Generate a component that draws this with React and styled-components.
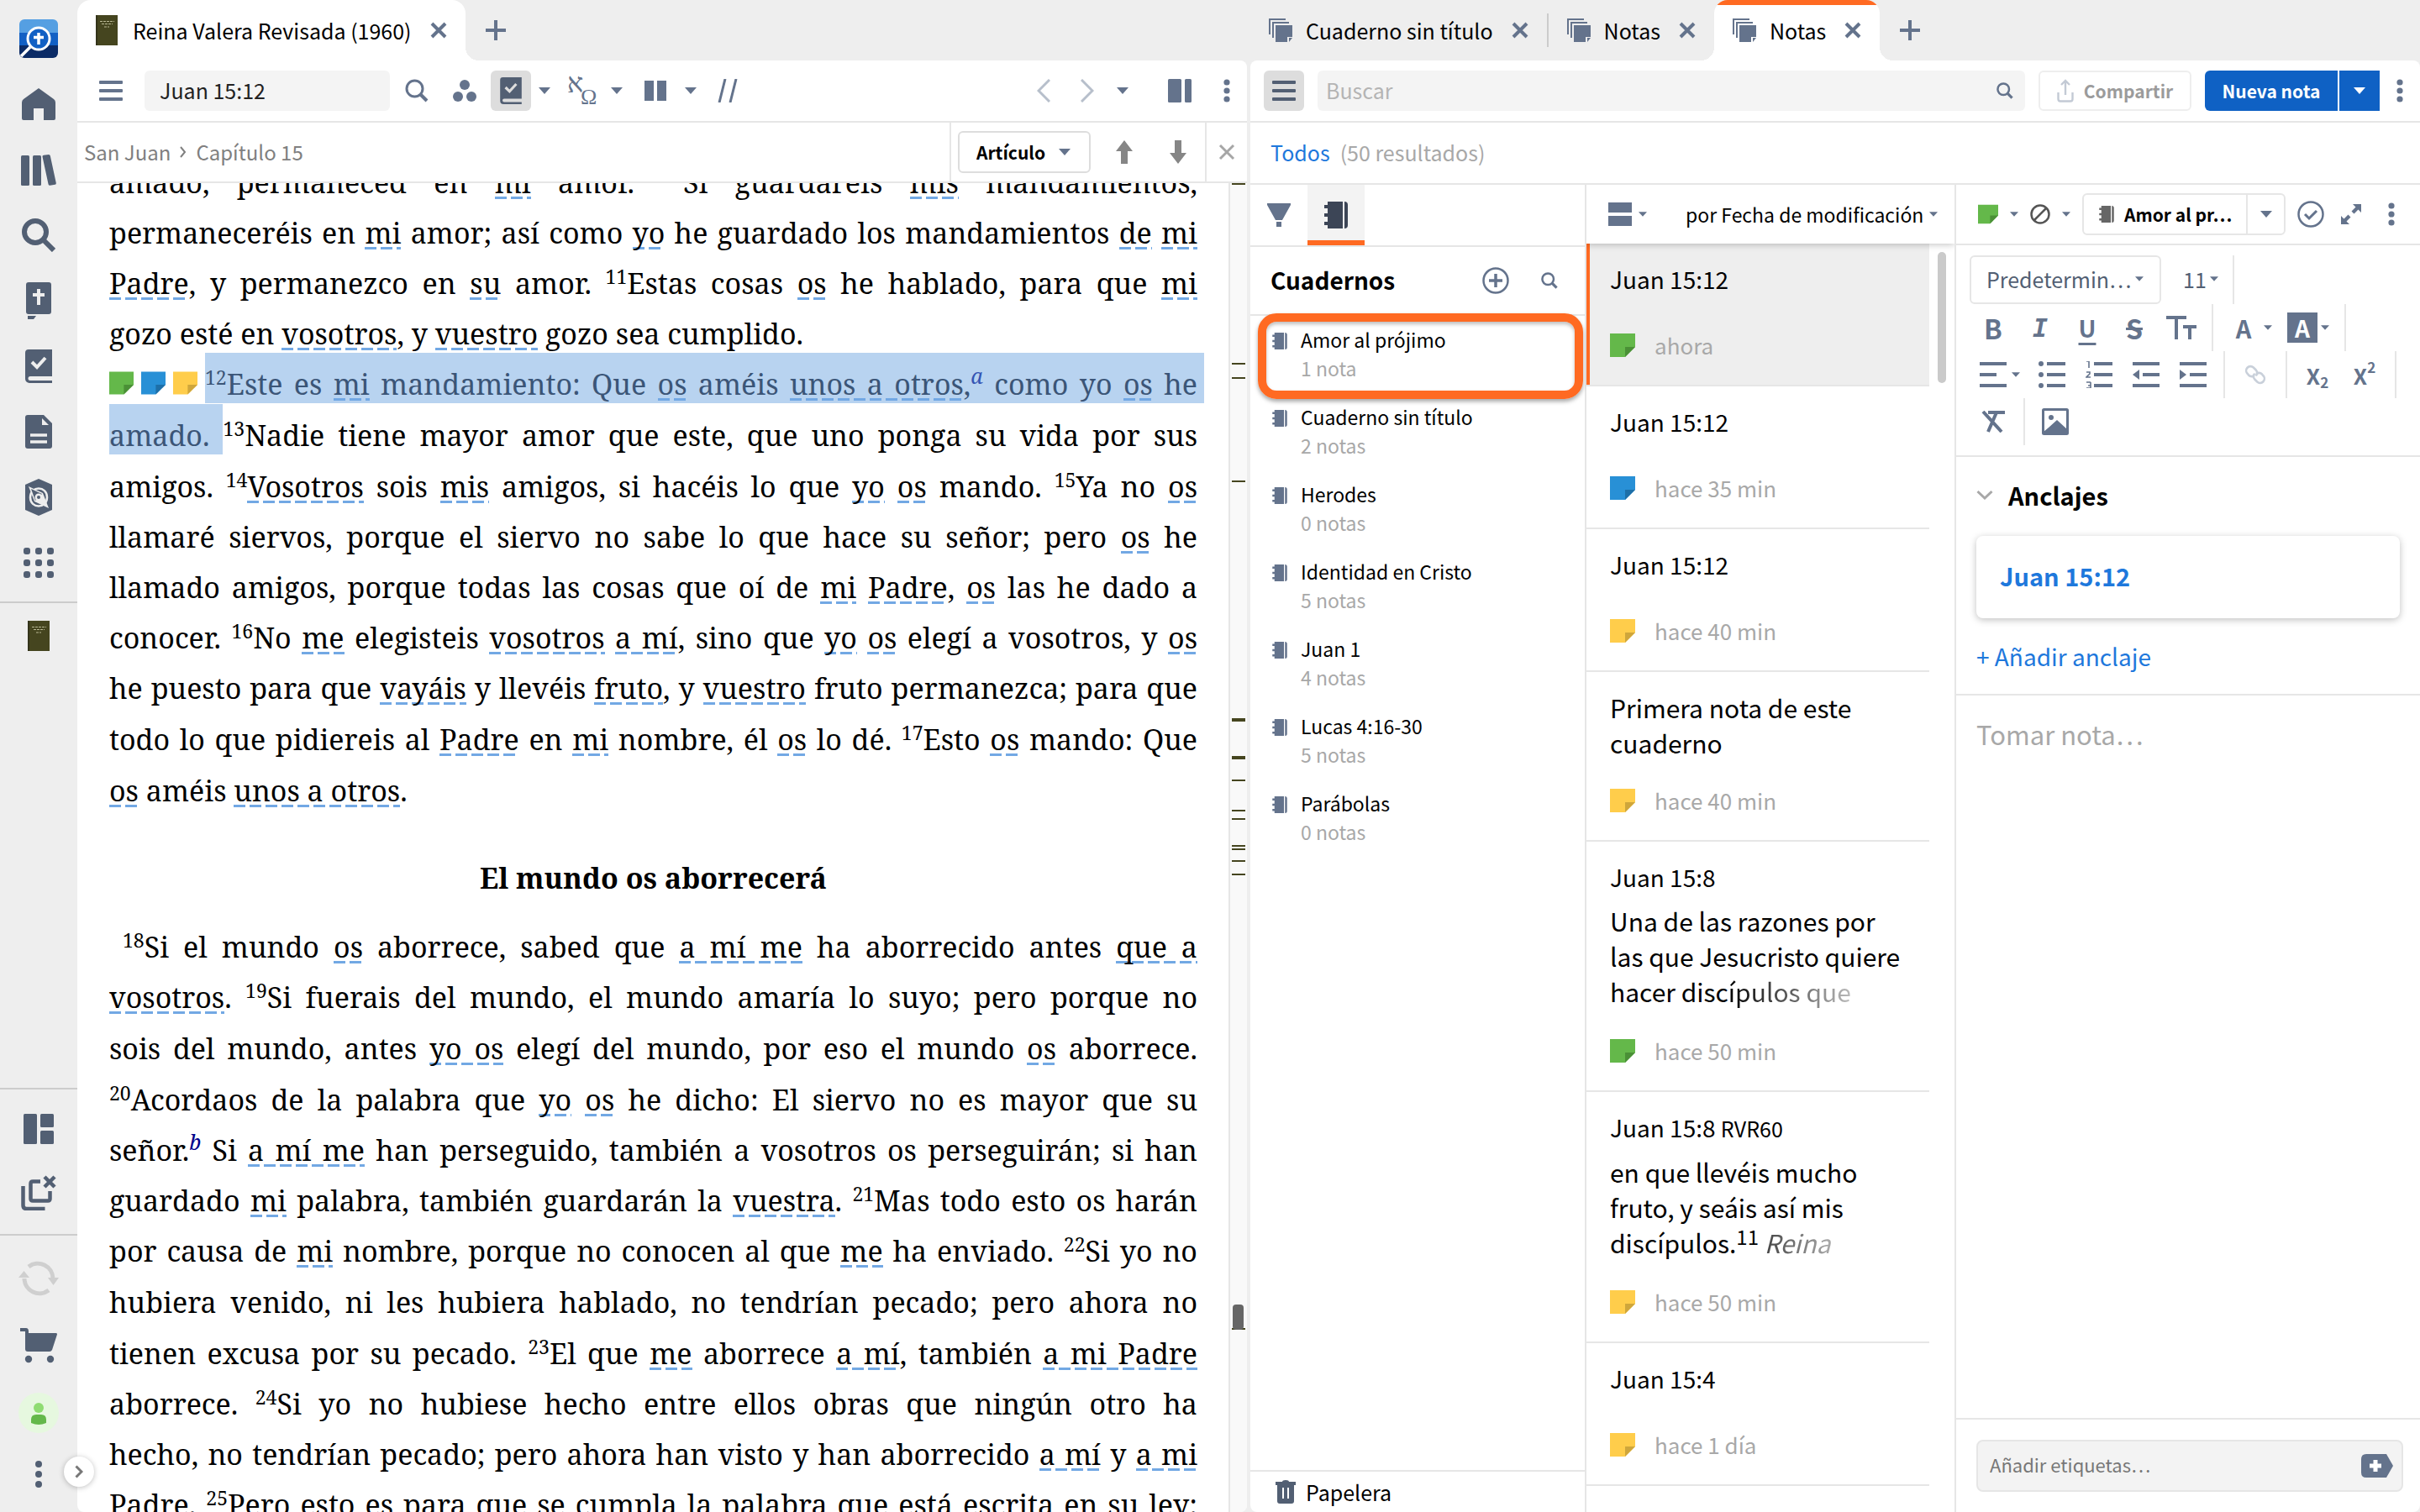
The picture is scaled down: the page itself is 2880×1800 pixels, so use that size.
import React from 'react';
import styled, { createGlobalStyle, css } from 'styled-components';

const ui = '"Noto Sans CJK SC", "Noto Sans", sans-serif';
const serif = '"Noto Serif", "Liberation Serif", serif';
const slate = '#64738c';
const slateDark = '#525f73';
const line = '#e6e6e6';
const orange = '#ff6a22';
const blue = '#1e78dc';

const GlobalStyle = createGlobalStyle`
  *, *::before, *::after { box-sizing: border-box; }
  body { margin: 0; background: #eeeeee; color: #000; font-family: ${ui}; }
  button, input, select, textarea { font: inherit; color: inherit; border: 0; background: none; padding: 0; margin: 0; outline: 0; }
  select { appearance: none; }
  svg { display: block; flex: none; }
  h1, h2, h3, p, ul { margin: 0; padding: 0; }
  ul { list-style: none; }
  a { text-decoration: none; color: inherit; }
`;

/* ---------- icons ---------- */

const Svg = ({ w, h = w, vb = `0 0 ${w} ${h}`, children, ...rest }) => (
  <svg width={w} height={h} viewBox={vb} fill="currentColor" aria-hidden="true" {...rest}>{children}</svg>
);
const stroke = (width, extra = {}) => ({ fill: 'none', stroke: 'currentColor', strokeWidth: width, ...extra });

const Caret = ({ w = 14 }) => <Svg w={w} h={w / 2 + 1} vb="0 0 14 8"><path d="M0 0h14L7 8z" /></Svg>;
const Menu = () => (
  <Svg w={28} h={24}>
    <rect width="28" height="4" rx="1" /><rect y="10" width="28" height="4" rx="1" /><rect y="20" width="28" height="4" rx="1" />
  </Svg>
);
const Magnifier = ({ w = 28, t = 3 }) => (
  <Svg w={w} vb="0 0 28 28"><g {...stroke(t)}><circle cx="11.5" cy="11.5" r="9.5" /><path d="M18 18l8 8" strokeWidth={t + 1} /></g></Svg>
);
const Dots = () => <Svg w={8} h={28}><circle cx="4" cy="4" r="3.6" /><circle cx="4" cy="14" r="3.6" /><circle cx="4" cy="24" r="3.6" /></Svg>;
const Cross = ({ w = 20, t = 4 }) => <Svg w={w} vb="0 0 20 20"><path d="M2 2l16 16M18 2L2 18" {...stroke(t)} /></Svg>;
const Plus = () => <Svg w={24}><path d="M12 0v24M0 12h24" {...stroke(4)} /></Svg>;
const BookThumb = ({ w = 26 }) => (
  <Svg w={w} h={36} vb="0 0 26 36">
    <path d="M0 0h26v36H0z" fill="#45451f" /><path d="M0 0h2v36H0z" fill="#33331a" />
    <path d="M5 7.500h17M7 10.500h13M10 14h6" stroke="#b9b894" strokeWidth="1.200" strokeDasharray="3 1" />
  </Svg>
);
const NotesStack = () => (
  <Svg w={28}>
    <path d="M1 19V1h19M5 23V5h19" {...stroke(2)} />
    <path d="M8 8h20v14h-6v6H8z" /><path d="M24 28l4-5h-4z" />
  </Svg>
);
const sticky = { green: ['#64b84a', '#4a9036'], blue: ['#2890d6', '#1d6fa8'], yellow: ['#ffcd4b', '#cfa63b'] };
const Sticky = ({ color, w = 30, h = 28 }) => (
  <Svg w={w} h={h} vb="0 0 30 28">
    <path d="M0 0h30v16L18 28H0z" fill={sticky[color][0]} />
    <path d="M30 16H18v12z" fill={sticky[color][1]} />
  </Svg>
);
const Notebook = ({ w = 28, h = 32 }) => (
  <Svg w={w} h={h} vb="0 0 28 32">
    <path d="M4 0h18v32H4v-4H0v-4h4v-6H0v-4h4V8H0V4h4z" />
    <path d="M24 0q4 0 4 4v24q0 4-4 4z" />
  </Svg>
);
const CheckBook = ({ w = 32, h = 40, bg = '#eeeeee' }) => (
  <Svg w={w} h={h} vb="0 0 32 40">
    <path d="M4 0h28v32H6a2.500 2.500 0 0 0 0 5h26v3H5a5 5 0 0 1-5-5V4a4 4 0 0 1 4-4z" />
    <path d="M8 15l6 6L24 10" fill="none" stroke={bg} strokeWidth="4" />
  </Svg>
);

const sideIcons = {
  home: <Svg w={40} h={38}><path d="M20 0l18 13q2 1.500 2 4v19q0 2-2 2H26V24H14v14H2q-2 0-2-2V17q0-2.500 2-4z" /></Svg>,
  library: <Svg w={42} h={37}><rect y="1" width="10" height="36" rx="1.500" /><rect x="14" y="1" width="10" height="36" rx="1.500" /><path d="M25.500 2.500Q25.300 1 27 .8L33 0q1.500 0 1.800 1.500L41.800 34q.2 1.500-1.300 1.700l-6 1q-1.500.1-1.900-1.300z" /></Svg>,
  search: <Svg w={40}><circle cx="16" cy="16" r="13" {...stroke(6)} /><path d="M26 26l12 12" {...stroke(6)} /></Svg>,
  bible: <Svg w={30} h={44}><path d="M3 0h24q3 0 3 3v32q0 3-3 3H3q-3 0-3-3V3q0-3 3-3zM2 40h10l-3 4H2z" /><path d="M15 8v19M8 15h14" stroke="#eeeeee" strokeWidth="4" /></Svg>,
  check: <CheckBook />,
  doc: <Svg w={32} h={40}><path d="M3 0h19l10 10v27q0 3-3 3H3q-3 0-3-3V3q0-3 3-3z" /><path d="M20 4v8h8z" fill="#eeeeee" /><path d="M6 24h20M6 32h20" stroke="#eeeeee" strokeWidth="3.500" /></Svg>,
  guide: <Svg w={32} h={44}><path d="M16 0l16 7v30l-16 7-16-7V7z" /><path d="M6 22c0-14 20-14 20 0M26 22c0 14-20 14-20 0" fill="none" stroke="#eeeeee" strokeWidth="2.500" /><path d="M4 9l17 8 7 18-17-8z" fill="#eeeeee" /><path d="M7 12l13 6-8 8z" /><circle cx="16" cy="22" r="4.500" fill="#eeeeee" /><circle cx="16" cy="22" r="2" /></Svg>,
  apps: <Svg w={36}>{[0, 14, 28].map(x => [0, 14, 28].map(y => <rect key={`${x}${y}`} x={x} y={y} width="8" height="8" rx="3" />))}</Svg>,
  layout: <Svg w={36}><rect width="16" height="36" rx="1.500" /><rect x="20" width="16" height="16" rx="1.500" /><rect x="20" y="20" width="16" height="16" rx="1.500" /></Svg>,
  closeAll: <Svg w={42}><g {...stroke(4.5)}><path d="M2.500 13v23q0 4 4 4h22" /><path d="M23 7.500H14q-2.500 0-2.500 2.500v18q0 2.500 2.500 2.500h18q2.500 0 2.500-2.500v-9" /><path d="M28 2l12 12M40 2L28 14" /></g></Svg>,
  sync: <Svg w={48} h={42}><path d="M12 7a18 18 0 0 1 29 14M36 35A18 18 0 0 1 7 21" {...stroke(5)} /><path d="M35 20h13l-6.500 9zM0 20h13L6.500 12z" /></Svg>,
  cart: <Svg w={44} h={42}><path d="M0 0h7q3 0 3 4v2h33q1 0 1 1.500L38 26q-1 2-3 2H9q-3 0-3-3V4H0z" /><circle cx="10" cy="37" r="4.200" /><circle cx="36" cy="37" r="4.200" /></Svg>,
  user: <Svg w={48}><circle cx="24" cy="24" r="24" fill="#e6f8df" /><circle cx="24" cy="18" r="6" fill="#8fdc72" /><path d="M15 36v-4q0-6 6-6h6q6 0 6 6v4q-9 4-18 0z" fill="#64b84a" /></Svg>,
  more: <Svg w={8} h={32}><circle cx="4" cy="4" r="4" /><circle cx="4" cy="16" r="4" /><circle cx="4" cy="28" r="4" /></Svg>,
};

/* ---------- side bar ---------- */

const Shell = styled.div`
  display: flex;
  height: 100vh;
  overflow: hidden;
`;

const SideBar = styled.nav`
  flex: none;
  width: 92px;
  display: flex;
  flex-direction: column;
  justify-content: space-between;
  color: ${slateDark};
`;

const SideGroup = styled.div`
  display: flex;
  flex-direction: column;
  padding: ${p => p.$pad || '7px 0'};
  border-top: ${p => (p.$ruled ? '2px solid #cccccc' : '0')};
`;

const SideButton = styled.button`
  height: ${p => p.$h || 78}px;
  display: flex;
  align-items: center;
  justify-content: center;
  color: ${p => (p.$off ? '#cfcfcf' : 'inherit')};
`;

const Expander = styled.button`
  position: absolute;
  left: 76px;
  bottom: 30px;
  width: 36px;
  height: 36px;
  border-radius: 50%;
  background: #fff;
  color: #777;
  box-shadow: 0 1px 6px rgba(0, 0, 0, 0.25);
  display: flex;
  align-items: center;
  justify-content: center;
  z-index: 2;
`;

/* ---------- panes ---------- */

const Panes = styled.main`
  flex: 1;
  min-width: 0;
  display: grid;
  grid-template-columns: 1fr 1fr;
  gap: 4px;
`;

const Pane = styled.section`
  min-width: 0;
  min-height: 0;
  display: flex;
  flex-direction: column;
`;

const TabBar = styled.div`
  flex: none;
  height: 72px;
  display: flex;
  align-items: center;
  color: ${slate};
`;

const flare = css`
  content: '';
  position: absolute;
  bottom: 0;
  width: 16px;
  height: 16px;
`;

const Tab = styled.div`
  position: relative;
  height: 72px;
  padding: 0 22px;
  display: flex;
  align-items: center;
  font-size: 25px;
  line-height: 36px;
  white-space: nowrap;
  ${p => p.$active && css`
    background: ${p.$accent ? `linear-gradient(${orange} 6px, #fff 6px)` : '#fff'};
    border-radius: 16px 16px 0 0;
    &::after {
      ${flare}
      left: 100%;
      background: radial-gradient(circle at 100% 0, transparent 16px, #fff 16px);
    }
  `}
  ${p => p.$accent && css`
    &::before {
      ${flare}
      right: 100%;
      background: radial-gradient(circle at 0 0, transparent 16px, #fff 16px);
    }
  `}
`;

const TabName = styled.button`
  display: flex;
  align-items: center;
  gap: ${p => p.$gap || 16}px;
  color: ${slate};
  span { color: #000; }
`;

const TabClose = styled.button`
  margin-left: 22px;
  color: ${slate};
`;

const TabRule = styled.div`
  width: 2px;
  height: 40px;
  background: #cccccc;
`;

const NewTab = styled.button`
  margin-left: 24px;
  color: ${slate};
`;

const Surface = styled.div`
  flex: 1;
  min-height: 0;
  display: flex;
  flex-direction: column;
  background: #fff;
  border-radius: ${p => p.$r || '8px'};
  overflow: hidden;
`;

const ToolBar = styled.div`
  flex: none;
  height: ${p => p.$h || 74}px;
  display: flex;
  align-items: center;
  border-bottom: 2px solid ${line};
  padding: 0 ${p => p.$pr || 0}px 0 ${p => p.$pl || 0}px;
  color: ${slate};
`;

const Tool = styled.button`
  flex: none;
  width: ${p => p.$w || 48}px;
  height: 48px;
  margin-left: ${p => p.$ml || 0}px;
  display: flex;
  align-items: center;
  justify-content: center;
  border-radius: 6px;
  background: ${p => (p.$on ? '#dddddd' : 'none')};
  color: ${p => (p.$on ? slateDark : p.$color || 'inherit')};
`;

const Grow = styled.div`
  flex: 1;
`;

const RefInput = styled.input`
  width: 292px;
  height: 48px;
  margin-left: 26px;
  padding: 0 18px 2px;
  border-radius: 6px;
  background: #f4f4f4;
  color: #222;
  font-size: 25px;
`;

const Crumbs = styled.div`
  flex: 1;
  display: flex;
  align-items: center;
  gap: 11px;
  padding-left: 8px;
  font-size: 24px;
  line-height: 36px;
  color: #808080;
`;

const CrumbTools = styled.div`
  height: 100%;
  display: flex;
  align-items: center;
  border-left: 2px solid ${line};
  padding-left: ${p => p.$pl || 0}px;
  color: #868686;
`;

const UnitSelect = styled.label`
  width: 158px;
  height: 50px;
  display: flex;
  align-items: center;
  justify-content: space-between;
  padding: 0 22px 0 20px;
  border: 2px solid #dddddd;
  border-radius: 6px;
  font-size: 21px;
  font-weight: 700;
  color: ${slate};
  select { color: #000; }
`;

/* ---------- scripture ---------- */

const Reader = styled.div`
  flex: 1;
  min-height: 0;
  display: flex;
`;

const Scripture = styled.article`
  flex: 1;
  min-width: 0;
  overflow: hidden;
  padding: 0 37px 0 38px;
  font-family: ${serif};
  font-size: 34px;
  font-weight: 450;
`;

const Passage = styled.div`
  margin-top: ${p => p.$mt}px;
`;

const VerseLine = styled.p`
  line-height: ${p => (p.$tall ? 62 : 60)}px;
  padding-left: ${p => (p.$indent ? 16 : 0)}px;
  white-space: nowrap;
  text-align: left;
  text-align-last: ${p => (p.$last ? 'left' : 'justify')};
`;

const SectionTitle = styled.h2`
  margin: 44px 0 22px;
  text-align: center;
  font-size: 34px;
  line-height: 60px;
`;

const VerseNumber = styled.sup`
  font-size: 23px;
  line-height: 0;
  vertical-align: 12px;
`;

const FootNote = styled.a`
  font-size: 25px;
  font-style: italic;
  line-height: 0;
  vertical-align: 13px;
  color: ${p => (p.$lit ? '#3455b4' : '#00008b')};
`;

const Linked = styled.span`
  background: repeating-linear-gradient(90deg, #72a8e4 0 14px, transparent 14px 19px) 0 calc(100% - 3px) / 100% 3px no-repeat;
`;

const Lit = styled.span`
  background: #b8d3f0;
  color: #3b5577;
  padding: 14px ${p => p.$end || 0}px 0 0;
  margin-right: -${p => p.$end || 0}px;
`;

const Anchors = styled.span`
  display: inline-flex;
  gap: 9px;
  margin-right: 9px;
`;

const Rail = styled.div`
  position: relative;
  flex: none;
  width: 22px;
  border-left: 2px solid ${line};
  background: #f9f9f9;
`;

const RailMark = styled.i`
  position: absolute;
  left: 2px;
  right: 2px;
  background: #45451f;
`;

const RailThumb = styled.i`
  position: absolute;
  left: 3px;
  width: 13px;
  height: 30px;
  border-radius: 4px;
  background: #666666;
`;

const first = [
  'amado, permaneced en _mi_ amor. ^10Si guardareis _mis_ mandamientos,',
  'permaneceréis en _mi_ amor; así como _yo_ he guardado los mandamientos _de_ _mi_',
  '_Padre_, y permanezco en _su_ amor. ^11Estas cosas _os_ he hablado, para que _mi_',
  'gozo esté en _vosotros_, y _vuestro_ gozo sea cumplido.',
];
const second = [
  'amigos. ^14_Vosotros_ sois _mis_ amigos, si hacéis lo que _yo_ _os_ mando. ^15Ya no _os_',
  'llamaré siervos, porque el siervo no sabe lo que hace su señor; pero _os_ he',
  'llamado amigos, porque todas las cosas que oí de _mi_ _Padre_, _os_ las he dado a',
  'conocer. ^16No _me_ elegisteis _vosotros_ _a mí_, sino que _yo_ _os_ elegí a vosotros, y _os_',
  'he puesto para que _vayáis_ y llevéis _fruto_, y _vuestro_ fruto permanezca; para que',
  'todo lo que pidiereis al _Padre_ en _mi_ nombre, él _os_ lo dé. ^17Esto _os_ mando: Que',
  '_os_ améis _unos a otros_.',
];
const third = [
  '^18Si el mundo _os_ aborrece, sabed que _a mí me_ ha aborrecido antes _que a_',
  '_vosotros_. ^19Si fuerais del mundo, el mundo amaría lo suyo; pero porque no',
  'sois del mundo, antes _yo os_ elegí del mundo, por eso el mundo _os_ aborrece.',
  '^20Acordaos de la palabra que _yo_ _os_ he dicho: El siervo no es mayor que su',
  'señor.{b} Si _a mí me_ han perseguido, también a vosotros os perseguirán; si han',
  'guardado _mi_ palabra, también guardarán la _vuestra_. ^21Mas todo esto os harán',
  'por causa de _mi_ nombre, porque no conocen al que _me_ ha enviado. ^22Si yo no',
  'hubiera venido, ni les hubiera hablado, no tendrían pecado; pero ahora no',
  'tienen excusa por su pecado. ^23El que _me_ aborrece _a mí_, también _a mi Padre_',
  'aborrece. ^24Si yo no hubiese hecho entre ellos obras que ningún otro ha',
  'hecho, no tendrían pecado; pero ahora han visto y han aborrecido _a mí_ y _a mi_',
  'Padre. ^25Pero esto es para que se cumpla la palabra que está escrita en su ley:',
];

// ^n verse number, _x_ linked word, {x} footnote
const mark = (text, lit) => text.split(/(\^\d+|_[^_]+_|\{\w\})/).map((part, i) => {
  if (part[0] === '^') return <VerseNumber key={i}>{part.slice(1)}</VerseNumber>;
  if (part[0] === '_') return <Linked key={i}>{part.slice(1, -1)}</Linked>;
  if (part[0] === '{') return <FootNote key={i} href="#" $lit={lit}>{part[1]}</FootNote>;
  return part;
});

// [top, height] of the visual filter hits along the scroll rail
const hits = [[0, 2], [214, 2], [231, 2], [354, 2], [637, 4], [682, 4], [710, 2], [746, 2], [756, 2], [788, 2], [792, 2], [806, 2], [822, 2], [1363, 2]];

const ReaderPane = () => (
  <Pane>
    <TabBar>
      <Tab $active>
        <TabName $gap={18}><BookThumb /><span>Reina Valera Revisada (1960)</span></TabName>
        <TabClose aria-label="Cerrar"><Cross /></TabClose>
      </Tab>
      <NewTab aria-label="Nueva pestaña"><Plus /></NewTab>
    </TabBar>
    <Surface $r="0 8px 8px 8px">
      <ToolBar $pl={26}>
        <Menu />
        <RefInput aria-label="Referencia" defaultValue="Juan 15:12" />
        <Tool $w={64} aria-label="Buscar"><Magnifier /></Tool>
        <Tool $w={50} aria-label="Recursos relacionados">
          <Svg w={28} h={26}><circle cx="14" cy="6" r="6" /><circle cx="6" cy="20" r="6" /><circle cx="22" cy="20" r="6" /></Svg>
        </Tool>
        <Tool $ml={6} $on aria-label="Filtros visuales"><CheckBook w={28} h={32} bg="#dddddd" /></Tool>
        <Tool $w={32} aria-label="Más filtros"><Caret /></Tool>
        <Tool $w={60} aria-label="Interlineal">
          <Svg w={40} h={44} fontFamily="Liberation Serif, serif">
            <text x="1" y="24" fontSize="32">א</text>
            <text x="17" y="38" fontSize="26">Ω</text>
          </Svg>
        </Tool>
        <Tool $w={20} aria-label="Opciones interlineal"><Caret /></Tool>
        <Tool $w={72} aria-label="Columnas"><Svg w={26} h={24}><path d="M0 0h11v24H0zM15 0h11v24H15z" /></Svg></Tool>
        <Tool $w={12} aria-label="Más columnas"><Caret /></Tool>
        <Tool $w={76} aria-label="Paralelos"><Svg w={24} h={28}><path d="M2 28L9 0M15 28L22 0" {...stroke(3)} /></Svg></Tool>
        <Grow />
        <Tool $w={52} $color="#b7bfcb" aria-label="Atrás"><Svg w={16} h={28}><path d="M15 1L2 14l13 13" {...stroke(3)} /></Svg></Tool>
        <Tool $w={52} $color="#b7bfcb" aria-label="Adelante"><Svg w={16} h={28}><path d="M1 1l13 13L1 27" {...stroke(3)} /></Svg></Tool>
        <Tool $w={32} aria-label="Historial"><Caret /></Tool>
        <Tool $w={64} $ml={20} aria-label="Panel lateral"><Svg w={28}><rect width="16" height="28" rx="1.500" /><rect x="20" width="8" height="28" rx="1.500" /></Svg></Tool>
        <Tool aria-label="Menú"><Dots /></Tool>
      </ToolBar>
      <ToolBar $h={72}>
        <Crumbs>
          <span>San Juan</span>
          <Svg w={8} h={14}><path d="M1 1l5 6-5 6" {...stroke(2)} /></Svg>
          <span>Capítulo 15</span>
        </Crumbs>
        <CrumbTools $pl={8}>
          <UnitSelect>
            <select aria-label="Unidad"><option>Artículo</option></select>
            <Caret />
          </UnitSelect>
          <Tool $w={64} $ml={8} aria-label="Anterior"><Svg w={20} h={28}><path d="M10 0l10 13h-6v15H6V13H0z" /></Svg></Tool>
          <Tool $w={64} aria-label="Siguiente"><Svg w={20} h={28}><path d="M10 28l10-13h-6V0H6v15H0z" /></Svg></Tool>
        </CrumbTools>
        <CrumbTools>
          <Tool $w={48} $color="#a6a6a6" aria-label="Cerrar"><Cross t={3} /></Tool>
        </CrumbTools>
      </ToolBar>
      <Reader>
        <Scripture>
          <Passage $mt={-31}>
            {first.map((text, i) => <VerseLine key={text} $last={i === 3}>{mark(text)}</VerseLine>)}
            <VerseLine>
              <Anchors>
                <Sticky color="green" w={29} /><Sticky color="blue" w={29} /><Sticky color="yellow" w={29} />
              </Anchors>
              <Lit $end={8}>{mark('^12Este es _mi_ mandamiento: Que _os_ améis _unos a otros_,{a} como yo _os_ he', true)}</Lit>
            </VerseLine>
            <VerseLine $tall>
              <Lit>amado. </Lit>
              {mark('^13Nadie tiene mayor amor que este, que uno ponga su vida por sus')}
            </VerseLine>
            {second.map((text, i) => <VerseLine key={text} $tall={i === 5} $last={i === 6}>{mark(text)}</VerseLine>)}
          </Passage>
          <SectionTitle>El mundo os aborrecerá</SectionTitle>
          <Passage $mt={0}>
            {third.map((text, i) => <VerseLine key={text} $indent={i === 0} $tall={i === 2 || i === 7}>{mark(text)}</VerseLine>)}
          </Passage>
        </Scripture>
        <Rail>
          {hits.map(([top, height]) => <RailMark key={top} style={{ top, height }} />)}
          <RailThumb style={{ top: 1335 }} />
        </Rail>
      </Reader>
    </Surface>
  </Pane>
);

/* ---------- notes ---------- */

const SearchBox = styled.label`
  flex: 1;
  min-width: 0;
  height: 48px;
  margin: 0 16px;
  padding: 0 14px 0 10px;
  display: flex;
  align-items: center;
  border-radius: 6px;
  background: #f4f4f4;
  font-size: 25px;
  input { flex: 1; padding-bottom: 2px; }
  input::placeholder { color: #b4b4b4; }
`;

const ShareButton = styled.button`
  width: 182px;
  height: 48px;
  margin-right: 16px;
  display: flex;
  align-items: center;
  justify-content: center;
  gap: 12px;
  border: 2px solid #eeeeee;
  border-radius: 6px;
  font-size: 21px;
  font-weight: 700;
  color: #9b9b9b;
  svg { color: #c3cad5; }
`;

const Primary = styled.button`
  width: ${p => p.$w}px;
  height: 48px;
  display: flex;
  align-items: center;
  justify-content: center;
  background: #0f61c4;
  color: #fff;
  font-size: 21px;
  font-weight: 700;
  border-radius: ${p => (p.$first ? '6px 0 0 6px' : '0')};
  margin-right: ${p => (p.$first ? 2 : 0)}px;
`;

const Results = styled.p`
  padding: 0 0 2px 24px;
  font-size: 25px;
  line-height: 36px;
  color: #a8a8a8;
  a { color: ${blue}; margin-right: 12px; }
`;

const NotesBody = styled.div`
  flex: 1;
  min-height: 0;
  display: grid;
  grid-template-columns: 400px 440px 1fr;
`;

const Column = styled.div`
  position: relative;
  min-width: 0;
  min-height: 0;
  display: flex;
  flex-direction: column;
  border-right: ${p => (p.$last ? '0' : `2px solid ${line}`)};
`;

const SideTab = styled.button`
  width: ${p => (p.$active ? 68 : 52)}px;
  height: 72px;
  margin-left: 8px;
  display: flex;
  align-items: center;
  justify-content: center;
  color: ${p => (p.$active ? '#3c4556' : slate)};
  background: ${p => (p.$active ? '#f3f3f3' : 'none')};
  box-shadow: ${p => (p.$active ? `inset 0 -6px 0 ${orange}` : 'none')};
`;

const ColumnTitle = styled.h2`
  flex: 1;
  padding: 0 0 2px 24px;
  font-size: 28px;
  line-height: 40px;
  font-weight: 700;
  color: #000;
`;

const NotebookList = styled.ul`
  position: relative;
  flex: 1;
`;

const NotebookItem = styled.li`
  display: flex;
  align-items: flex-start;
  gap: 16px;
  padding: 11px 0 13px 26px;
  font-size: 23px;
  line-height: 34px;
  svg { margin-top: 9px; color: ${slate}; }
  small { display: block; font-size: 23px; color: #a8a8a8; }
`;

const Highlight = styled.div`
  position: absolute;
  left: 9px;
  right: 2px;
  top: -3px;
  height: 102px;
  border: 10px solid ${orange};
  border-radius: 22px;
  box-shadow: 0 3px 5px rgba(0, 0, 0, 0.35), inset 0 3px 4px rgba(0, 0, 0, 0.25);
  pointer-events: none;
`;

const Trash = styled.button`
  height: 50px;
  display: flex;
  align-items: center;
  gap: 12px;
  padding-left: 30px;
  border-top: 2px solid ${line};
  font-size: 25px;
  line-height: 36px;
  svg { color: ${slateDark}; }
`;

const ListHeader = styled.div`
  position: relative;
  z-index: 1;
  flex: none;
  height: 70px;
  padding: 0 20px 0 26px;
  display: flex;
  align-items: center;
  gap: 6px;
  color: ${slate};
  background: #fff;
  box-shadow: 0 1px 8px rgba(0, 0, 0, 0.25);
  font-size: 23px;
  clip-path: inset(0 0 -12px 0);
  select { color: #000; }
`;

const NoteScroll = styled.div`
  flex: 1;
  min-height: 0;
  display: flex;
  overflow: hidden;
`;

const NoteList = styled.ul`
  flex: 1;
  min-width: 0;
`;

const ScrollThumb = styled.div`
  width: 10px;
  height: 156px;
  margin: 10px 10px 0;
  border-radius: 5px;
  background: #cacaca;
`;

const Note = styled.li`
  padding: 21px 16px 27px 28px;
  border-bottom: 2px solid ${line};
  font-size: 30px;
  line-height: 42px;
  ${p => p.$selected && css`
    background: #eeeeee;
    box-shadow: inset 4px 0 0 ${orange};
  `}
`;

const NoteText = styled.div`
  min-height: 52px;
  margin-bottom: 28px;
  h3 { font-size: 28px; font-weight: 400; }
  h3 + p { padding: 10px 0 2px; }
  h3 small { font-size: 25px; }
  sup { font-size: 24px; line-height: 0; vertical-align: 10px; }
`;

const Fade = styled.span`
  background: linear-gradient(90deg, ${p => p.$from || '#000'}, ${p => p.$to || '#bbb'});
  background-clip: text;
  color: transparent;
  font-style: ${p => (p.$italic ? 'italic' : 'normal')};
`;

const NoteMeta = styled.div`
  display: flex;
  align-items: center;
  gap: 23px;
  font-size: 26px;
  line-height: 40px;
  color: #a8a8a8;
`;

const NotebookPicker = styled.div`
  width: 242px;
  height: 50px;
  display: flex;
  align-items: center;
  border: 2px solid ${line};
  border-radius: 6px;
  font-size: 21px;
  font-weight: 700;
`;

const PickerName = styled.button`
  flex: 1;
  height: 100%;
  display: flex;
  align-items: center;
  gap: 12px;
  padding-left: 18px;
  border-right: 2px solid ${line};
  font-weight: 700;
  white-space: nowrap;
  color: #000;
  svg { color: #666; }
`;

const FormatBar = styled.div`
  padding: 12px 0 12px 16px;
  border-bottom: 2px solid ${line};
  color: ${slate};
  font-weight: 700;
`;

const FormatRow = styled.div`
  display: flex;
  height: ${p => p.$h || 56}px;
`;

const FormatGroup = styled.div`
  display: flex;
  align-items: center;
  padding: 0 ${p => (p.$pr === undefined ? 8 : p.$pr)}px 0 ${p => p.$pl || 0}px;
  border-right: ${p => (p.$open ? '0' : `2px solid ${line}`)};
`;

const FormatButton = styled(Tool)`
  width: ${p => p.$w || 56}px;
  font-family: ${p => (p.$slab ? '"DejaVu Sans Mono", monospace' : 'inherit')};
  font-size: ${p => p.$size || 32}px;
  font-weight: 700;
  font-style: ${p => (p.$italic ? 'italic' : 'normal')};
  text-decoration: ${p => p.$deco || 'none'};
  text-decoration-thickness: 3px;
  text-underline-offset: 6px;
  sub, sup { font-size: 17px; line-height: 0; }
  sub { margin-top: 18px; }
  sup { margin-top: -18px; }
`;

const FillSwatch = styled.span`
  width: 36px;
  height: 36px;
  display: flex;
  align-items: center;
  justify-content: center;
  background: ${slate};
  color: #fff;
  font-size: 28px;
`;

const FontSelect = styled.label`
  display: flex;
  align-items: center;
  gap: 4px;
  height: 58px;
  width: ${p => p.$w}px;
  padding: 0 ${p => p.$pr}px 2px ${p => p.$pl}px;
  justify-content: space-between;
  border: ${p => (p.$boxed ? `2px solid ${line}` : '0')};
  border-radius: 6px;
  font-size: 25px;
  font-weight: 400;
  select { color: ${slateDark}; }
`;

const AnchorSection = styled.section`
  padding: 0 24px;
  border-bottom: 2px solid ${line};
`;

const AnchorTitle = styled.h3`
  display: flex;
  align-items: center;
  gap: 18px;
  padding-bottom: 4px;
  font-size: 29px;
  line-height: 90px;
  svg { color: #a8a8a8; }
`;

const AnchorCard = styled.a`
  display: block;
  padding: 0 28px 4px;
  border-radius: 8px;
  box-shadow: 0 2px 8px rgba(0, 0, 0, 0.25);
  font-size: 29px;
  line-height: 94px;
  font-weight: 700;
  color: ${blue};
`;

const AddAnchor = styled.button`
  font-size: 28px;
  line-height: 90px;
  color: ${blue};
`;

const NoteInput = styled.textarea`
  flex: 1;
  padding: 22px 24px;
  resize: none;
  font-size: 31px;
  line-height: 48px;
  &::placeholder { color: #a8a8a8; }
`;

const TagRow = styled.div`
  padding: 24px 20px 24px 24px;
  border-top: 2px solid ${line};
`;

const TagBox = styled.label`
  display: flex;
  align-items: center;
  height: 62px;
  padding: 0 10px 0 14px;
  border: 2px solid ${line};
  border-radius: 8px;
  background: #f3f3f3;
  color: ${slate};
  font-size: 22px;
  input { flex: 1; padding-bottom: 4px; }
  input::placeholder { color: #777; }
`;

const notebooks = [
  ['Amor al prójimo', '1 nota'],
  ['Cuaderno sin título', '2 notas'],
  ['Herodes', '0 notas'],
  ['Identidad en Cristo', '5 notas'],
  ['Juan 1', '4 notas'],
  ['Lucas 4:16-30', '5 notas'],
  ['Parábolas', '0 notas'],
];

const notes = [
  { title: 'Juan 15:12', color: 'green', time: 'ahora', selected: true },
  { title: 'Juan 15:12', color: 'blue', time: 'hace 35 min' },
  { title: 'Juan 15:12', color: 'yellow', time: 'hace 40 min' },
  { body: <>Primera nota de este<br />cuaderno</>, color: 'yellow', time: 'hace 40 min' },
  {
    title: 'Juan 15:8',
    body: <>Una de las razones por<br />las que Jesucristo quiere<br />hacer disc<Fade>ípulos que</Fade></>,
    color: 'green',
    time: 'hace 50 min',
  },
  {
    title: <>Juan 15:8 <small>RVR60</small></>,
    body: <>en que llevéis mucho<br />fruto, y seáis así mis<br />discípulos.<sup>11</sup> <Fade $italic $from="#444" $to="#aaa">Reina</Fade></>,
    color: 'yellow',
    time: 'hace 50 min',
  },
  { title: 'Juan 15:4', color: 'yellow', time: 'hace 1 día' },
];

const ListLines = ({ children, short }) => (
  <Svg w={32}>
    <path d={short ? 'M0 3h32M0 16h20M0 29h32' : 'M10 3h22M10 16h22M10 29h22'} {...stroke(4)} />
    {children}
  </Svg>
);

const NotebookColumn = () => (
  <Column>
    <ToolBar>
      <SideTab aria-label="Filtros"><Svg w={28}><path d="M0 0h28v2L18 20h-8L0 2zM11 22h6v6h-6z" /></Svg></SideTab>
      <SideTab $active aria-label="Cuadernos"><Notebook /></SideTab>
    </ToolBar>
    <ToolBar $h={82} $pr={10}>
      <ColumnTitle>Cuadernos</ColumnTitle>
      <Tool $w={64} aria-label="Añadir cuaderno">
        <Svg w={32}><circle cx="16" cy="16" r="14.500" {...stroke(2.5)} /><path d="M16 8v16M8 16h16" {...stroke(3.5)} /></Svg>
      </Tool>
      <Tool $w={64} aria-label="Buscar cuaderno"><Magnifier w={20} t={3.5} /></Tool>
    </ToolBar>
    <NotebookList>
      {notebooks.map(([name, count]) => (
        <NotebookItem key={name}>
          <Notebook w={18} h={20} />
          <div>{name}<small>{count}</small></div>
        </NotebookItem>
      ))}
      <Highlight />
    </NotebookList>
    <Trash>
      <Svg w={24} h={28}><path d="M0 2h8q0-2 4-2t4 2h8v4H0zM2 6h20v19q0 3-3 3H5q-3 0-3-3z" /><path d="M9 9v13M15 9v13" stroke="#fff" strokeWidth="2" /></Svg>
      Papelera
    </Trash>
  </Column>
);

const NoteColumn = () => (
  <Column>
    <ListHeader>
      <Tool $w={28} aria-label="Vista"><Svg w={28}><path d="M0 0h28v12H0zM0 16h28v12H0z" /></Svg></Tool>
      <Tool $w={14} aria-label="Opciones de vista"><Caret w={10} /></Tool>
      <Grow />
      <select aria-label="Ordenar"><option>por Fecha de modificación</option></select>
      <Caret w={10} />
    </ListHeader>
    <NoteScroll>
      <NoteList>
        {notes.map((note, i) => (
          <Note key={i} $selected={note.selected}>
            <NoteText>
              {note.title && <h3>{note.title}</h3>}
              {note.body && <p>{note.body}</p>}
            </NoteText>
            <NoteMeta><Sticky color={note.color} />{note.time}</NoteMeta>
          </Note>
        ))}
      </NoteList>
      <ScrollThumb />
    </NoteScroll>
  </Column>
);

const EditorColumn = () => (
  <Column $last>
    <ToolBar $h={72} $pl={26}>
      <Sticky color="green" w={24} h={24} />
      <Tool $w={38} aria-label="Color"><Caret w={10} /></Tool>
      <Svg w={24} color="#555"><circle cx="12" cy="12" r="10.500" {...stroke(2.5)} /><path d="M5 19L19 5" {...stroke(2.5)} /></Svg>
      <Tool $w={38} aria-label="Estilo"><Caret w={10} /></Tool>
      <NotebookPicker>
        <PickerName><Notebook w={18} h={20} />Amor al pr…</PickerName>
        <Tool $w={43} aria-label="Elegir cuaderno"><Caret /></Tool>
      </NotebookPicker>
      <Tool $w={60} aria-label="Listo"><Svg w={32}><circle cx="16" cy="16" r="14.500" {...stroke(2.5)} /><path d="M9 16l5 5 9-9" {...stroke(3)} /></Svg></Tool>
      <Tool $w={36} aria-label="Expandir">
        <Svg w={24}><path d="M14 0h10v10l-3.500-3.500-5 5-3-3 5-5zM0 24V14l3.500 3.500 5-5 3 3-5 5L10 24z" /></Svg>
      </Tool>
      <Tool $w={60} aria-label="Menú"><Dots /></Tool>
    </ToolBar>
    <FormatBar>
      <FormatRow $h={58}>
        <FontSelect $boxed $w={228} $pl={18} $pr={19}>
          <select aria-label="Fuente"><option>Predetermin…</option></select>
          <Caret w={10} />
        </FontSelect>
        <FormatGroup $pr={0}>
          <FontSelect $w={85} $pl={26} $pr={17}>
            <select aria-label="Tamaño"><option>11</option></select>
            <Caret w={10} />
          </FontSelect>
        </FormatGroup>
      </FormatRow>
      <FormatRow>
        <FormatGroup>
          <FormatButton>B</FormatButton>
          <FormatButton $italic $slab $size={30}>I</FormatButton>
          <FormatButton $deco="underline" $size={28}>U</FormatButton>
          <FormatButton $deco="line-through">S</FormatButton>
          <FormatButton aria-label="Mayúsculas"><Svg w={36} h={28}><path d="M0 2h24M12 2v26M20 13h16M28 13v15" {...stroke(4)} /></Svg></FormatButton>
        </FormatGroup>
        <FormatGroup $pl={14} $pr={14}>
          <FormatButton $w={44} $size={29}>A</FormatButton>
          <FormatButton $w={14} aria-label="Color de texto"><Caret w={10} /></FormatButton>
          <FormatButton $w={36} $ml={16}><FillSwatch>A</FillSwatch></FormatButton>
          <FormatButton $w={18} aria-label="Color de fondo"><Caret w={10} /></FormatButton>
        </FormatGroup>
      </FormatRow>
      <FormatRow>
        <FormatGroup $pl={8}>
          <FormatButton $w={40} aria-label="Alinear"><ListLines short /></FormatButton>
          <FormatButton $w={14} aria-label="Alineación"><Caret w={10} /></FormatButton>
          <FormatButton $ml={8} aria-label="Viñetas"><ListLines><circle cx="3" cy="3" r="3" /><circle cx="3" cy="16" r="3" /><circle cx="3" cy="29" r="3" /></ListLines></FormatButton>
          <FormatButton aria-label="Numeración">
            <ListLines><path d="M1 0h3v8M1 13h4v2l-4 4h5M1 25h5M3 29h3M1 32h5V25" {...stroke(1.6)} /></ListLines>
          </FormatButton>
          <FormatButton aria-label="Reducir sangría"><Svg w={32}><path d="M0 3h32M12 16h20M0 29h32" {...stroke(4)} /><path d="M8 10v12l-8-6z" /></Svg></FormatButton>
          <FormatButton aria-label="Aumentar sangría"><Svg w={32}><path d="M0 3h32M12 16h20M0 29h32" {...stroke(4)} /><path d="M0 10v12l8-6z" /></Svg></FormatButton>
        </FormatGroup>
        <FormatGroup $pl={8}>
          <FormatButton $color="#c9d0da" aria-label="Enlace">
            <Svg w={24} vb="0 0 24 24"><g {...stroke(2.6, { strokeLinecap: 'round' })}><path d="M10 13.500a5 5 0 0 1-6-1L2.800 11a5 5 0 0 1 7-7.500l3 3a5 5 0 0 1 .5 6" /><path d="M14 10.500a5 5 0 0 1 6 1l1.200 1.500a5 5 0 0 1-7 7.500l-3-3a5 5 0 0 1-.5-6" /></g></Svg>
          </FormatButton>
        </FormatGroup>
        <FormatGroup $pl={8}>
          <FormatButton $size={26}>X<sub>2</sub></FormatButton>
          <FormatButton $size={26}>X<sup>2</sup></FormatButton>
        </FormatGroup>
      </FormatRow>
      <FormatRow>
        <FormatGroup>
          <FormatButton aria-label="Borrar formato"><Svg w={28} h={26}><path d="M8 2h20M18 2L8 25M2 1l22 24" {...stroke(4)} /></Svg></FormatButton>
        </FormatGroup>
        <FormatGroup $pl={8} $open>
          <FormatButton aria-label="Imagen">
            <Svg w={32}><rect x="1.500" y="1.500" width="29" height="29" rx="1" {...stroke(3)} /><circle cx="11" cy="11" r="3" /><path d="M2 28l6-5 10-9 12 11v5H2z" /></Svg>
          </FormatButton>
        </FormatGroup>
      </FormatRow>
    </FormatBar>
    <AnchorSection>
      <AnchorTitle><Svg w={20} h={12}><path d="M1.500 2L10 10l8.500-8" {...stroke(3)} /></Svg>Anclajes</AnchorTitle>
      <AnchorCard href="#">Juan 15:12</AnchorCard>
      <AddAnchor>+ Añadir anclaje</AddAnchor>
    </AnchorSection>
    <NoteInput aria-label="Nota" placeholder="Tomar nota…" />
    <TagRow>
      <TagBox>
        <input aria-label="Etiquetas" placeholder="Añadir etiquetas…" />
        <Svg w={38} h={28}><path d="M6 0h24l8 14-8 14H6q-6 0-6-6V6q0-6 6-6z" /><path d="M17 7v14M10 14h14" stroke="#fff" strokeWidth="5" /></Svg>
      </TagBox>
    </TagRow>
  </Column>
);

const NotesPane = () => (
  <Pane>
    <TabBar>
      <Tab>
        <TabName><NotesStack /><span>Cuaderno sin título</span></TabName>
        <TabClose aria-label="Cerrar"><Cross /></TabClose>
      </Tab>
      <TabRule />
      <Tab>
        <TabName><NotesStack /><span>Notas</span></TabName>
        <TabClose aria-label="Cerrar"><Cross /></TabClose>
      </Tab>
      <Tab $active $accent>
        <TabName><NotesStack /><span>Notas</span></TabName>
        <TabClose aria-label="Cerrar"><Cross /></TabClose>
      </Tab>
      <NewTab aria-label="Nueva pestaña"><Plus /></NewTab>
    </TabBar>
    <Surface>
      <ToolBar>
        <Tool $ml={16} $on aria-label="Barra lateral"><Menu /></Tool>
        <SearchBox>
          <input type="search" aria-label="Buscar" placeholder="Buscar" />
          <Magnifier w={20} t={3.5} />
        </SearchBox>
        <ShareButton disabled>
          <Svg w={20} h={28}><path d="M1.500 16v8q0 2.500 2.500 2.500h12q2.500 0 2.500-2.500v-8M10 19V2M5 7l5-5 5 5" {...stroke(2.4)} /></Svg>
          Compartir
        </ShareButton>
        <Primary $w={158} $first>Nueva nota</Primary>
        <Primary $w={48} aria-label="Más opciones"><Caret /></Primary>
        <Tool aria-label="Menú"><Dots /></Tool>
      </ToolBar>
      <ToolBar>
        <Results><a href="#">Todos</a>(50 resultados)</Results>
      </ToolBar>
      <NotesBody>
        <NotebookColumn />
        <NoteColumn />
        <EditorColumn />
      </NotesBody>
    </Surface>
  </Pane>
);

export default function App() {
  return (
    <>
      <GlobalStyle />
      <Shell>
        <SideBar>
          <div>
            <SideGroup>
              <SideButton aria-label="Logos">
                <Svg w={46}>
                  <clipPath id="tile"><rect width="46" height="46" rx="6" /></clipPath>
                  <g clipPath="url(#tile)">
                    <path d="M0 0h46v16H0z" fill="#559fe2" /><path d="M0 16h46v15H0z" fill="#1260c4" /><path d="M0 31h46v15H0z" fill="#0b2b66" />
                    <circle cx="23" cy="23" r="13" fill="#1260c4" stroke="#fff" strokeWidth="3" />
                    <path d="M13 33L2 44M23 16v14M17 21.500h12" stroke="#fff" strokeWidth="3.500" />
                  </g>
                </Svg>
              </SideButton>
              {['home', 'library', 'search', 'bible', 'check', 'doc', 'guide', 'apps'].map(name => (
                <SideButton key={name} aria-label={name}>{sideIcons[name]}</SideButton>
              ))}
            </SideGroup>
            <SideGroup $ruled $pad="0">
              <SideButton aria-label="Reina Valera Revisada"><BookThumb /></SideButton>
            </SideGroup>
          </div>
          <div>
            <SideGroup $ruled $pad="9px 0 11px">
              <SideButton $h={76} aria-label="layout">{sideIcons.layout}</SideButton>
              <SideButton $h={76} aria-label="closeAll">{sideIcons.closeAll}</SideButton>
            </SideGroup>
            <SideGroup $ruled $pad="11px 0 12px">
              <SideButton $h={80} $off aria-label="sync">{sideIcons.sync}</SideButton>
              <SideButton $h={80} aria-label="cart">{sideIcons.cart}</SideButton>
              <SideButton $h={80} aria-label="user">{sideIcons.user}</SideButton>
              <SideButton $h={66} aria-label="more">{sideIcons.more}</SideButton>
            </SideGroup>
          </div>
        </SideBar>
        <Expander aria-label="Expandir barra">
          <Svg w={10} h={16}><path d="M1.500 1.500L8 8l-6.500 6.500" {...stroke(3)} /></Svg>
        </Expander>
        <Panes>
          <ReaderPane />
          <NotesPane />
        </Panes>
      </Shell>
    </>
  );
}
